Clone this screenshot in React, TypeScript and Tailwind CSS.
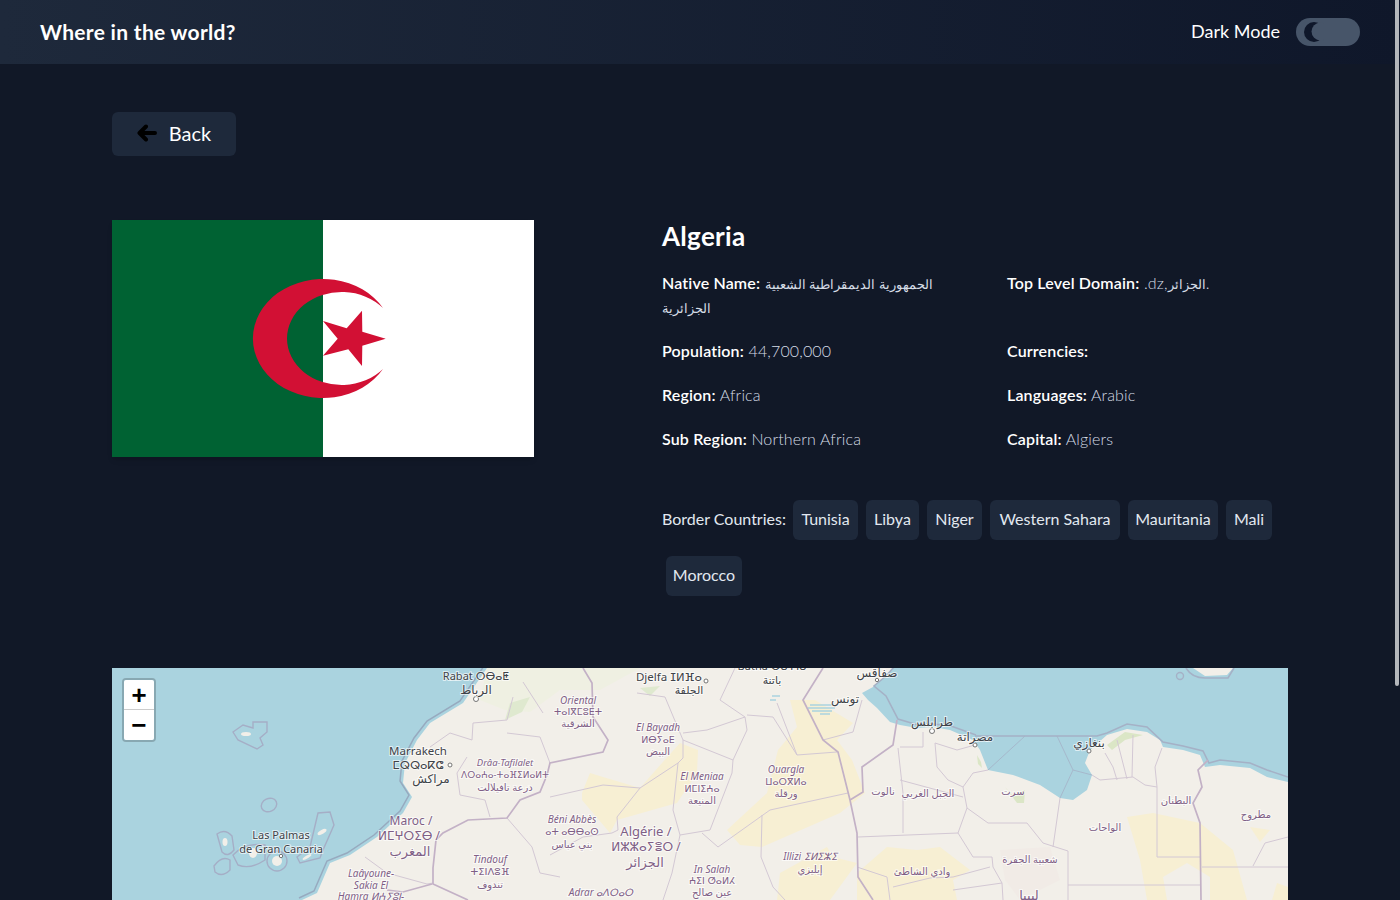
import type { ReactNode } from "react"

const font = { fontFamily: "Lato, 'Noto Sans', sans-serif" }

const borders = [
  "M583,668 L592,683 L593,717 L608,740 L603,752 L550,763 L547,775 L540,792 L520,800 L507,818 L468,820 L443,833 L436,840 L433,868 L433,884 L468,900",
  "M432,884 L403,892 L387,890",
  "M823,668 L803,700 L823,740 L838,752 L850,800 L857,833 L858,877 L873,900",
  "M850,800 L863,792 L862,767 L893,745 L897,720",
  "M1208,760 L1198,770 L1202,787 L1193,803 L1200,823 L1201,900",
]

const thinBorders = [
  "M640,788 L678,763 L683,758 L683,740 L665,697 L637,693",
  "M640,788 L617,817 L618,830 L612,833 L583,837 L550,855",
  "M550,797 L603,785 L640,788",
  "M683,740 L733,760 L732,773 L710,830 L680,835 L673,810 L678,763",
  "M702,833 L718,847 L770,810 L848,793",
  "M733,760 L747,730 L745,717 L707,730 L683,733",
  "M747,715 L773,717 L797,755 L837,752",
  "M777,703 L797,755",
  "M823,740 L853,732",
  "M762,815 L761,857 L773,887 L785,900",
  "M680,835 L672,873 L663,900",
  "M858,837 L958,833 L973,857 L992,857 L993,867 L1002,883 L1003,900",
  "M903,793 L903,833",
  "M898,748 L903,793",
  "M857,867 L887,877 L890,900",
  "M893,887 L930,878 L953,877 L990,867",
  "M1002,883 L953,890",
  "M958,833 L967,808 L963,787 L973,773 L988,770",
  "M900,780 L963,797",
  "M967,808 L988,823 L1027,823 L1043,843 L1068,851 L1068,900",
  "M1060,798 L1053,847",
  "M1068,885 L1200,885",
  "M1157,787 L1157,857 L1200,857",
  "M1157,787 L1145,785 L1133,777 L1100,780 L1092,775",
  "M1162,748 L1155,767 L1157,787",
  "M1117,780 L1113,767 L1105,753",
  "M1127,779 L1117,740",
  "M1132,777 L1133,735",
  "M935,743 L937,767 L948,780 L963,787",
  "M935,743 L957,750 L975,745",
  "M900,747 L923,747 L923,732",
  "M1202,867 L1288,867",
  "M1253,866 L1265,843 L1288,837",
  "M473,723 L472,740 L450,733 L430,747",
  "M467,757 L457,773 L460,795 L485,800 L490,817",
  "M507,733 L540,737 L550,763",
  "M513,697 L507,720 L473,723",
  "M543,713 L523,682",
  "M365,857 L387,873 L427,884 L433,883",
  "M507,818 L532,847 L540,873 L560,877",
  "M853,732 L862,700",
  "M745,717 L720,700 L735,668",
]

const sea = "M487,668 L463,703 L430,723 L417,740 L405,763 L403,783 L412,797 L403,813 L377,837 L350,855 L330,863 L317,893 L302,900 L112,900 L112,668 Z"
const medi = "M893,668 L885,677 L873,687 L862,693 L868,700 L877,708 L890,722 L900,725 L917,728 L933,727 L950,730 L973,740 L980,750 L988,770 L1013,775 L1040,785 L1060,798 L1073,800 L1087,790 L1092,775 L1085,763 L1090,750 L1107,735 L1127,729 L1147,732 L1160,740 L1163,747 L1183,750 L1200,755 L1205,767 L1220,765 L1250,768 L1267,777 L1288,782 L1288,668 Z"

type Label = { x: number; y: number; t: string; size?: number; color?: string; italic?: boolean }

const labels: Label[] = [
  { x: 476, y: 680, t: "Rabat ⵔⴱⴰⵟ", size: 11, color: "#3f4348" },
  { x: 476, y: 694, t: "الرباط", size: 12, color: "#3f4348" },
  { x: 418, y: 755, t: "Marrakech", size: 11.5, color: "#3f4348" },
  { x: 418, y: 769, t: "ⵎⵕⵕⴰⴽⵛ", size: 11.5, color: "#3f4348" },
  { x: 431, y: 783, t: "مراكش", size: 12, color: "#3f4348" },
  { x: 281, y: 839, t: "Las Palmas", size: 11, color: "#3f4348" },
  { x: 281, y: 853, t: "de Gran Canaria", size: 11, color: "#3f4348" },
  { x: 505, y: 766, t: "Drâa-Tafilalet", size: 9.5, italic: true },
  { x: 505, y: 778, t: "ⴷⵔⴰⵄⴰ-ⵜⴰⴼⵉⵍⴰⵍⵜ", size: 9 },
  { x: 505, y: 791, t: "درعة تافيلالت", size: 10 },
  { x: 411, y: 825, t: "Maroc /", size: 12 },
  { x: 409, y: 840, t: "ⵍⵎⵖⵔⵉⴱ /", size: 12 },
  { x: 410, y: 856, t: "المغرب", size: 13 },
  { x: 490, y: 863, t: "Tindouf", size: 10, italic: true },
  { x: 490, y: 875, t: "ⵜⵉⵏⴷⵓⴼ", size: 10 },
  { x: 490, y: 888, t: "تندوف", size: 10 },
  { x: 371, y: 877, t: "Laâyoune-", size: 10, italic: true },
  { x: 371, y: 889, t: "Sakia El", size: 10, italic: true },
  { x: 371, y: 900, t: "Hamra ⵍⵄⵢⵓⵏ-", size: 10, italic: true },
  { x: 578, y: 704, t: "Oriental", size: 10, italic: true },
  { x: 578, y: 715, t: "ⵜⴰⵏⴳⵎⵓⴹⵜ", size: 9.5 },
  { x: 578, y: 727, t: "الشرقية", size: 10 },
  { x: 669, y: 681, t: "Djelfa ⵊⵍⴼⴰ", size: 11.5, color: "#3f4348" },
  { x: 689, y: 694, t: "الجلفة", size: 11, color: "#3f4348" },
  { x: 658, y: 731, t: "El Bayadh", size: 10, italic: true },
  { x: 658, y: 743, t: "ⵍⴱⵢⴰⴹ", size: 9.5 },
  { x: 658, y: 755, t: "البيض", size: 10 },
  { x: 702, y: 780, t: "El Meniaa", size: 10, italic: true },
  { x: 702, y: 792, t: "ⵍⵎⵏⵉⵄⴰ", size: 9.5 },
  { x: 702, y: 804, t: "المنيعة", size: 10 },
  { x: 786, y: 773, t: "Ouargla", size: 10, italic: true },
  { x: 786, y: 785, t: "ⵡⴰⵔⴳⵍⴰ", size: 9.5 },
  { x: 786, y: 797, t: "ورقلة", size: 10 },
  { x: 572, y: 823, t: "Béni Abbès", size: 10, italic: true },
  { x: 572, y: 835, t: "ⴰⵜ ⴰⴱⴱⴰⵙ", size: 9.5 },
  { x: 572, y: 848, t: "بني عباس", size: 10 },
  { x: 646, y: 836, t: "Algérie /", size: 13 },
  { x: 646, y: 851, t: "ⵍⵣⵣⴰⵢⴻⵔ /", size: 12 },
  { x: 645, y: 867, t: "الجزائر", size: 13 },
  { x: 712, y: 873, t: "In Salah", size: 10, italic: true },
  { x: 712, y: 884, t: "ⵄⵉⵏ ⵚⴰⵍⵃ", size: 9.5 },
  { x: 712, y: 896, t: "عين صالح", size: 10 },
  { x: 601, y: 896, t: "Adrar ⴰⴷⵔⴰⵔ", size: 10, italic: true },
  { x: 810, y: 860, t: "Illizi ⵉⵍⵉⵣⵉ", size: 10, italic: true },
  { x: 810, y: 873, t: "إيليزي", size: 10 },
  { x: 883, y: 795, t: "نالوت", size: 10 },
  { x: 928, y: 797, t: "الجبل الغربي", size: 10 },
  { x: 922, y: 875, t: "وادي الشاطئ", size: 10 },
  { x: 1013, y: 795, t: "سرت", size: 10 },
  { x: 1105, y: 831, t: "الواحات", size: 10 },
  { x: 1030, y: 863, t: "شعبية الجفرة", size: 10 },
  { x: 1029, y: 900, t: "ليبيا", size: 13 },
  { x: 1176, y: 804, t: "البطنان", size: 10 },
  { x: 1256, y: 818, t: "مطروح", size: 10 },
]

const darkArabic: Label[] = [
  { x: 772, y: 684, t: "باتنة", size: 11 },
  { x: 772, y: 670, t: "Batna ⴱⴰⵜⵏⴰ", size: 11 },
  { x: 877, y: 677, t: "صفاقس", size: 12 },
  { x: 845, y: 703, t: "تونس", size: 12 },
  { x: 932, y: 726, t: "طرابلس", size: 12 },
  { x: 975, y: 741, t: "مصراتة", size: 12 },
  { x: 1089, y: 747, t: "بنغازي", size: 12 },
]

const MapLabel = ({ l, fill }: { l: Label; fill: string }) => (
  <text
    x={l.x}
    y={l.y}
    textAnchor="middle"
    fontSize={l.size || 10}
    fontStyle={l.italic ? "italic" : "normal"}
    fill={l.color || fill}
    stroke="#ffffff"
    strokeOpacity={0.65}
    strokeWidth={2}
    paintOrder="stroke"
    fontFamily="'Noto Sans', 'DejaVu Sans', sans-serif"
  >
    {l.t}
  </text>
)

const Map = () => (
  <div className="relative h-[448px] bg-[#f2efe9]">
    <svg viewBox="112 668 1176 448" className="block h-full w-full">
      <rect x="112" y="668" width="1176" height="448" fill="#f2efe9" />
      {/* desert */}
      <g fill="#f7efd3">
        <path d="M582,793 L590,773 L603,777 L640,788 L662,763 L680,743 L698,750 L697,773 L677,803 L617,820 L610,833 L582,800 Z" />
        <path d="M790,700 L815,700 L853,723 L837,740 L852,760 L865,793 L840,813 L762,847 L740,845 L727,830 L767,793 L778,750 L797,727 Z" />
        <path d="M777,900 L780,873 L827,847 L833,857 L857,863 L830,900 Z" />
        <path d="M857,873 L887,847 L917,850 L940,847 L970,870 L953,880 L957,900 L857,900 Z" />
        <path d="M1127,817 L1153,813 L1200,823 L1233,850 L1247,900 L1210,900 L1210,877 L1187,863 L1163,877 L1167,900 L1147,900 L1140,860 Z" />
        <path d="M1250,827 L1270,830 L1260,842 Z" />
        <path d="M1288,887 L1277,883 L1272,900 L1288,900 Z" />
      </g>
      <path d="M1000,850 L1050,847 L1060,880 L1020,900 L1005,880 Z" fill="#f1ebe6" />
      {/* green */}
      <path d="M487,668 L640,668 L600,690 L560,690 L530,712 L505,710 L480,700 Z" fill="#eff0e2" />
      <path d="M510,703 L530,697 L522,712 L505,720 Z" fill="#dfe9cf" />
      <path d="M640,688 L660,686 L650,696 Z" fill="#dfe9cf" />
      <path d="M1107,745 L1125,732 L1143,735 L1125,740 L1112,750 Z" fill="#dbe6c6" />
      <path d="M1005,787 L1012,795 L1025,790 L1024,803 L1017,803 Z" fill="#dbe6c6" />
      <path d="M977,755 L981,762 L982,768 L978,764 Z" fill="#dbe6c6" />
      {/* sea */}
      <path d={sea} fill="#aad3df" />
      <path d={medi} fill="#aad3df" />
      <path d="M1193,668 L1233,668 L1227,675 L1205,676 Z" fill="#f2efe9" />
      <circle cx="1180" cy="676" r="3.5" fill="none" stroke="#a5b1c6" strokeWidth="1.4" />
      <path d="M1186,668 Q1192,678 1205,678 L1228,678 L1234,668" fill="none" stroke="#a5b1c6" strokeWidth="1.6" />
      {/* salt lakes */}
      <g stroke="#aad3df" strokeWidth="1.6">
        <path d="M772,696 L780,696 M770,700 L776,700 M810,705 L833,705 M808,708 L835,708 M812,711 L832,711 M820,714 L830,714" />
      </g>
      {/* coast halo */}
      <path d="M487,668 L463,703 L430,723 L417,740 L405,763 L403,783 L412,797 L403,813 L377,837 L350,855 L330,863 L317,893 L302,900" fill="none" stroke="#97aabf" strokeWidth="1.5" transform="translate(-3,-2)" />
      <path d="M893,668 L885,677 L873,687 L885,697 L897,720 L917,726 L933,725 L950,727 L975,736" fill="none" stroke="#a5b1c6" strokeWidth="1.6" transform="translate(1,-1)" />
      <path d="M975,736 L1097,736 L1107,733 L1127,724 L1147,727 L1163,742 L1183,746 L1203,751 L1209,763 L1220,760 L1250,763 L1267,770 L1288,777" fill="none" stroke="#a5b1c6" strokeWidth="1.6" />
      <path d="M988,770 L1025,736 M1060,798 L1073,770 L1057,736 M1073,770 L1092,775" fill="none" stroke="#a5b1c6" strokeWidth="0.8" />
      {/* canary islands */}
      <g fill="none" stroke="#a5aec6" strokeWidth="1.4">
        <path d="M233,732 L243,725 L253,728 L253,722 L267,722 L267,732 L260,738 L263,745 L257,749 L238,740 Z" />
        <ellipse cx="269" cy="805" rx="8" ry="6.5" transform="rotate(-25 269 805)" />
        <path d="M217,834 Q225,828 232,836 L234,850 Q228,858 222,852 Z" />
        <path d="M214,866 Q222,855 230,860 L230,870 Q222,878 215,872 Z" />
        <path d="M233,855 Q245,842 265,845 L265,860 Q250,870 238,865 Z" />
        <ellipse cx="277" cy="861" rx="10" ry="10" />
        <path d="M297,857 L310,847 L318,813 L330,812 L334,825 L323,850 L320,858 L300,863 Z" />
      </g>
      <g fill="#f2efe9" stroke="none">
        <ellipse cx="246" cy="734" rx="5" ry="2" />
        <ellipse cx="225" cy="842" rx="2.5" ry="4" />
        <ellipse cx="253" cy="853" rx="4" ry="5" />
        <ellipse cx="277" cy="861" rx="5" ry="5" />
        <ellipse cx="322" cy="832" rx="5" ry="2" transform="rotate(-30 322 832)" />
        <ellipse cx="307" cy="857" rx="5" ry="1.5" transform="rotate(-30 307 857)" />
      </g>
      {/* borders */}
      <g fill="none" stroke="#d3c8d4" strokeWidth="1">
        {thinBorders.map((d) => <path key={d} d={d} />)}
      </g>
      <g fill="none" stroke="#c3b1c6" strokeWidth="1.7">
        {borders.map((d) => <path key={d} d={d} />)}
      </g>
      {/* city dots */}
      <g fill="#ffffff" stroke="#666" strokeWidth="0.9">
        <circle cx="476" cy="699" r="2.5" />
        <circle cx="450" cy="765" r="2" />
        <circle cx="932" cy="731" r="2.5" />
        <circle cx="975" cy="745" r="2" />
        <circle cx="1089" cy="751" r="2" />
        <circle cx="706" cy="681" r="2" />
        <circle cx="877" cy="680" r="1.7" />
        <circle cx="281" cy="856" r="1.7" />
      </g>
      {labels.map((l) => <MapLabel key={l.x + l.t} l={l} fill="#7f5f86" />)}
      {darkArabic.map((l) => <MapLabel key={l.x + l.t} l={l} fill="#3f4348" />)}
    </svg>
    <div className="absolute left-[10px] top-[10px] w-[34px] overflow-hidden rounded-[4px] border-2 border-[rgba(0,0,0,0.2)] bg-clip-padding">
      <div className="flex h-[30px] items-center justify-center border-b border-[#cccccc] bg-white pt-1 text-[26px] font-bold leading-none text-black" style={{ fontFamily: "'Liberation Mono', monospace" }}>+</div>
      <div className="flex h-[30px] items-center justify-center bg-white pt-1 text-[26px] font-bold leading-none text-black" style={{ fontFamily: "'Liberation Mono', monospace" }}>−</div>
    </div>
  </div>
)

const Flag = () => (
  <svg viewBox="0 0 422 237" className="block h-[237px] w-[422px] shrink-0">
    <rect width="211" height="237" fill="#006233" />
    <rect x="211" width="211" height="237" fill="#ffffff" />
    <path d="M271,88 A70,59.5 0 1 0 271,149 A54.7,46.5 0 1 1 271,88 Z" fill="#d21034" />
    <path d="M211,101 L234.7,108.3 L250,90.7 L250.3,111.7 L273.7,118.7 L250.3,125.7 L250,146 L236.3,129.3 L211,135.7 L225.7,118.7 Z" fill="#d21034" />
  </svg>
)

const Arabic = ({ children }: { children: ReactNode }) => (
  <span className="text-[13px] font-extralight leading-none">{children}</span>
)

const Row = ({ label, value }: { label: string; value?: ReactNode }) => (
  <p className="mb-5 h-auto text-[16px] font-light leading-6 tracking-[0.15px] text-[#d5dce6]">
    <span className="font-semibold text-white">{label}:</span> {value}
  </p>
)

const Tag = ({ name, width }: { name: string; width: string }) => (
  <span className={`mx-1 my-2 flex h-10 items-center justify-center rounded-md bg-[#1e293b] pb-[2px] text-[16px] text-[#e2e8f0] ${width}`}>{name}</span>
)

export default function App() {
  const countries = [
    { name: "Tunisia", width: "w-[65px]" },
    { name: "Libya", width: "w-[53px]" },
    { name: "Niger", width: "w-[55px]" },
    { name: "Western Sahara", width: "w-[130px]" },
    { name: "Mauritania", width: "w-[90px]" },
    { name: "Mali", width: "w-[46px]" },
    { name: "Morocco", width: "w-[76px]" },
  ]

  return (
    <div className="relative h-screen overflow-hidden bg-[#111827] text-white" style={font}>
      <header className="flex h-16 items-center justify-between bg-gradient-to-r from-[#1e293b] to-[#0f172a] px-10">
        <h1 className="text-[21px] font-bold tracking-[0.3px]">Where in the world?</h1>
        <div className="flex items-center gap-4">
          <span className="pb-[2px] text-[18px]">Dark Mode</span>
          <div className="flex h-7 w-16 items-center rounded-full bg-[#475569] pl-2">
            <svg viewBox="0 0 20 20" className="h-5 w-5">
              <circle cx="10" cy="10" r="10" fill="#0f172a" />
              <circle cx="16.5" cy="9.5" r="9" fill="#475569" />
            </svg>
          </div>
        </div>
      </header>
      <main className="px-28 pt-12">
        <button className="flex h-11 w-[124px] items-center justify-center gap-3 rounded-md bg-[#1e293b] pb-[2px] text-[20px]">
          <svg viewBox="0 0 20 18" className="h-[18px] w-5" fill="none" stroke="#000" strokeWidth="4" strokeLinecap="round" strokeLinejoin="round"><path d="M18,9 H3 M9,2.5 L2.5,9 L9,15.5" /></svg>
          Back
        </button>
        <section className="mt-16 flex gap-32">
          <div className="self-start shadow-md"><Flag /></div>
          <div className="flex-1">
            <h2 className="mb-[19px] text-[26px] font-bold leading-8 tracking-[0.3px]">Algeria</h2>
            <div className="grid grid-cols-[345px_1fr]">
              <div className="w-[275px]">
                <Row label="Native Name" value={<Arabic>الجمهورية الديمقراطية الشعبية الجزائرية</Arabic>} />
                <Row label="Population" value="44,700,000" />
                <Row label="Region" value="Africa" />
                <Row label="Sub Region" value="Northern Africa" />
              </div>
              <div>
                <div className="mb-[44px]"><Row label="Top Level Domain" value={<>.dz,<Arabic>الجزائر</Arabic>.</>} /></div>
                <Row label="Currencies" />
                <Row label="Languages" value="Arabic" />
                <Row label="Capital" value="Algiers" />
              </div>
            </div>
            <div className="mt-[21px] flex flex-wrap items-center">
              <span className="w-[127px] pb-[2px] text-[16px] text-[#e2e8f0]">Border Countries:</span>
              {countries.map((c) => <Tag key={c.name} name={c.name} width={c.width} />)}
            </div>
          </div>
        </section>
        <div className="mt-16"><Map /></div>
      </main>
      <div className="absolute right-[1px] top-0 h-[686px] w-1 rounded-b-sm bg-[#b4b7bb]" />
    </div>
  )
}
